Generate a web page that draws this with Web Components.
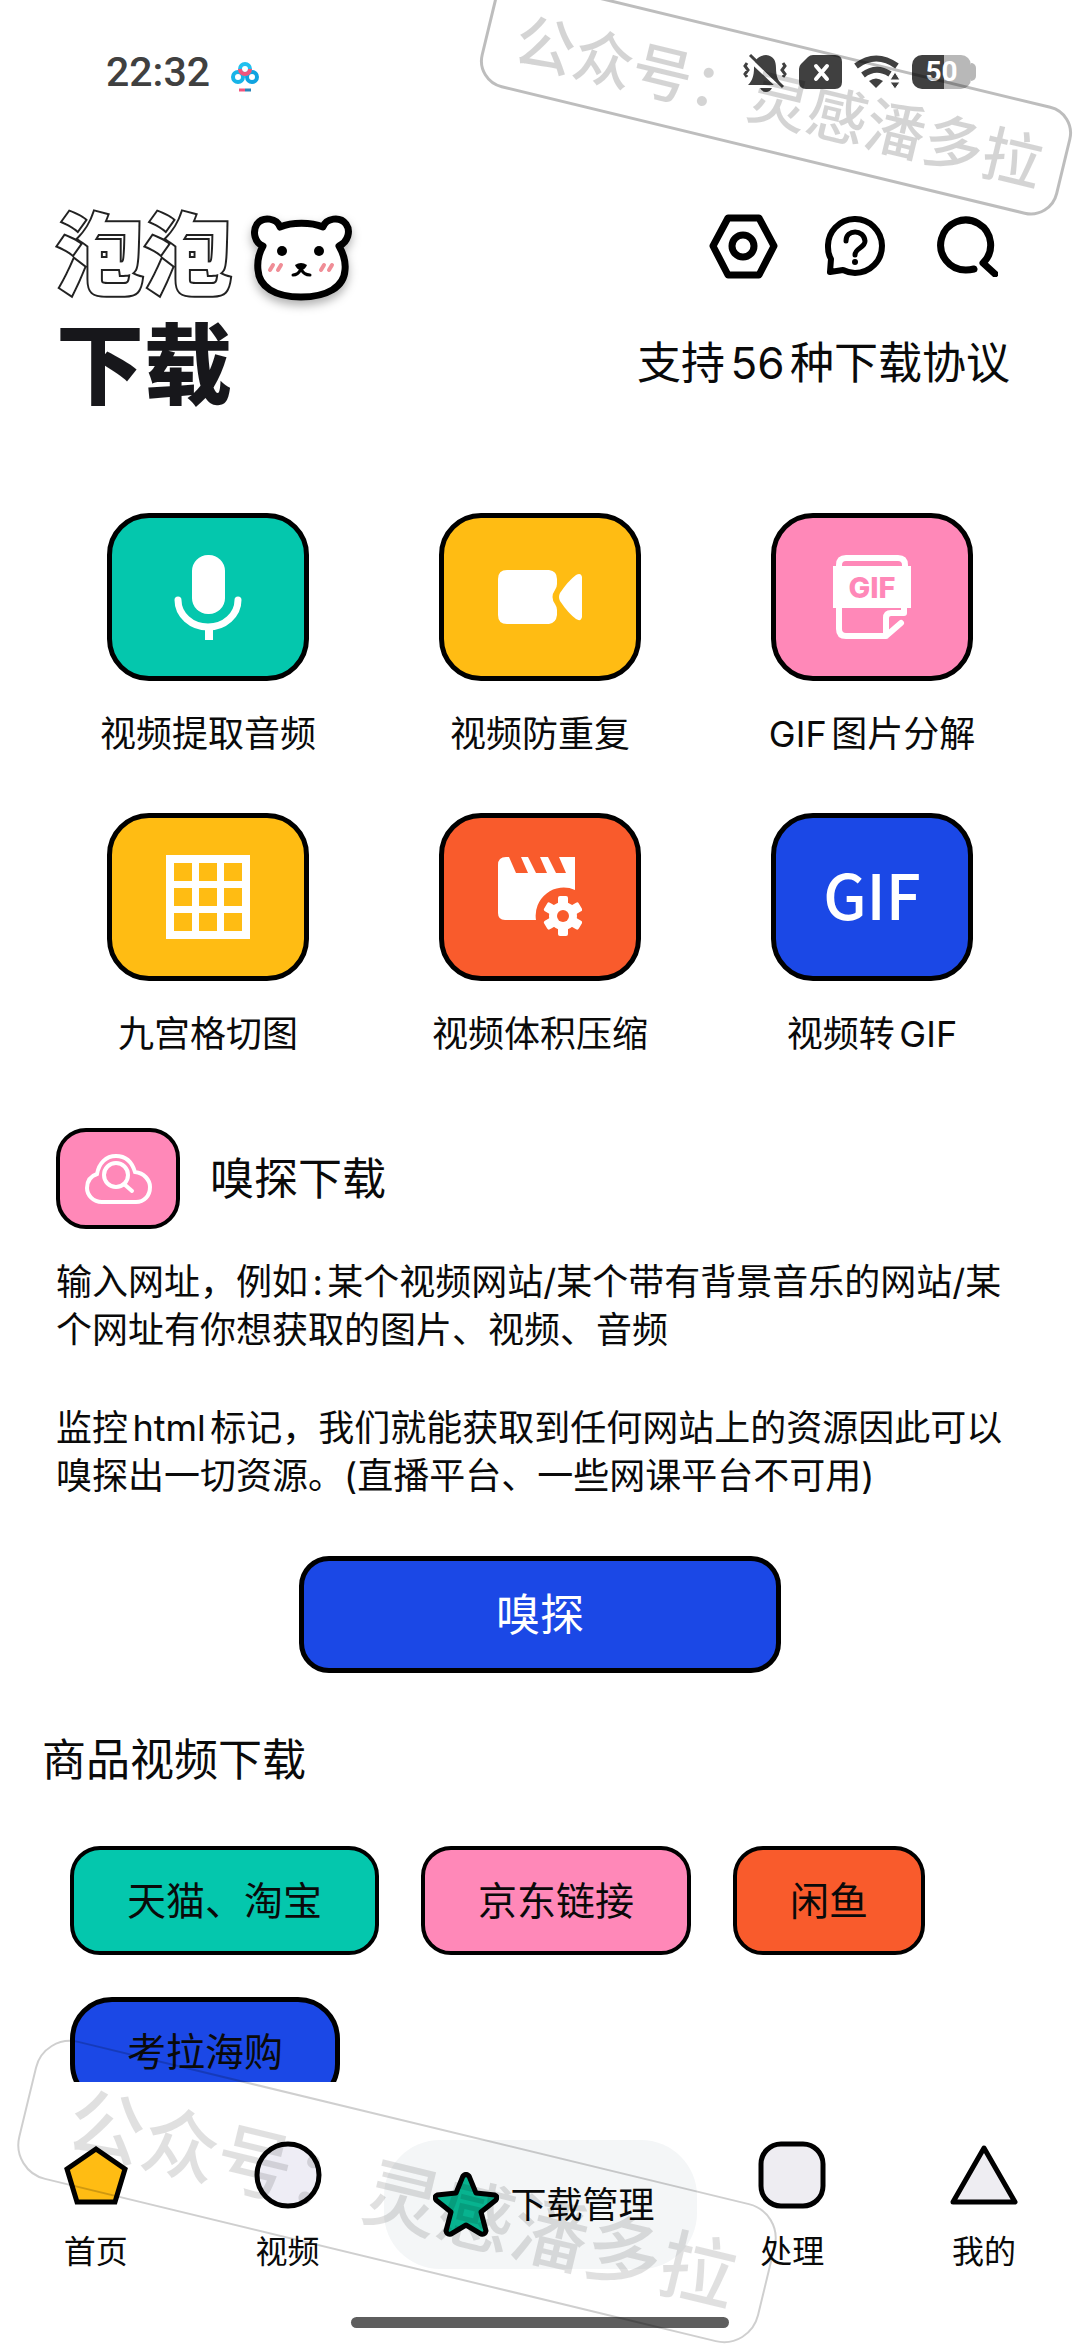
<!DOCTYPE html>
<html lang="zh-CN">
<head>
<meta charset="UTF-8">
<meta name="viewport" content="width=device-width, initial-scale=1">
<title>泡泡下载</title>
<style>
    body {
        margin: 0;
        background: #fff;
        color: #0a0a0a;
        font-family: Inter, "Noto Sans CJK SC", sans-serif;
        --green: #04c7ad;
        --yellow: #ffbc13;
        --pink: #ff88b8;
        --orange: #f95b2c;
        --blue: #1b48e6;
    }
</style>
</head>
<body>
<app-shell>
    <status-bar slot="top" time="22:32" battery="50"></status-bar>
    <app-header slot="top"></app-header>

    <tool-grid>
        <tool-tile icon="mic" color="green">视频提取音频</tool-tile>
        <tool-tile icon="camera" color="yellow">视频防重复</tool-tile>
        <tool-tile icon="gifFile" color="pink">GIF图片分解</tool-tile>
        <tool-tile icon="grid" color="yellow">九宫格切图</tool-tile>
        <tool-tile icon="film" color="orange">视频体积压缩</tool-tile>
        <tool-tile icon="gif" color="blue">视频转GIF</tool-tile>
    </tool-grid>

    <sniff-panel>
        <span slot="title">嗅探下载</span>
        <p>输入网址，例如:某个视频网站/某个带有背景音乐的网站/某<br>个网址有你想获取的图片、视频、音频</p>
        <p>监控html标记，我们就能获取到任何网站上的资源因此可以<br>嗅探出一切资源。(直播平台、一些网课平台不可用)</p>
        <span slot="action">嗅探</span>
    </sniff-panel>

    <link-section>
        <span slot="title">商品视频下载</span>
        <link-chip color="green">天猫、淘宝</link-chip>
        <link-chip color="pink">京东链接</link-chip>
        <link-chip color="orange">闲鱼</link-chip>
        <link-chip color="blue" large>考拉海购</link-chip>
    </link-section>

    <tab-bar slot="bottom">
        <tab-item icon="pentagon">首页</tab-item>
        <tab-item icon="circle">视频</tab-item>
        <tab-item icon="star" pill>下载管理</tab-item>
        <tab-item icon="square">处理</tab-item>
        <tab-item icon="triangle">我的</tab-item>
    </tab-bar>

    <water-mark slot="overlay" class="upper">公众号：灵感潘多拉</water-mark>
    <water-mark slot="overlay" class="lower">公众号：灵感潘多拉</water-mark>
</app-shell>

<script>
const icons = {
    pan: `<svg width="28" height="31" viewBox="0 0 28 31" fill="none">
        <circle cx="7" cy="16" r="5" stroke="#18b4e8" stroke-width="4"/>
        <circle cx="21" cy="16" r="5" stroke="#0fa3e0" stroke-width="4"/>
        <circle cx="14" cy="8" r="5" stroke="#22c0ee" stroke-width="4"/>
        <path d="M9 8a5 5 0 0 0 10 0" stroke="#f2547c" stroke-width="4"/>
        <path d="M8 29h6" stroke="#f2547c" stroke-width="3"/><path d="M14 29h6" stroke="#2a84b8" stroke-width="3"/>
    </svg>`,
    mute: `<svg width="44" height="39" viewBox="0 0 44 39" fill="none">
        <path d="M23 2C14 3 11 8 11 15c0 8-2 13-6 17h34c-4-4-6-9-6-17 0-7-2-12-10-13z" fill="#404040"/>
        <path d="M17 35h12q-2 4-6 4t-6-4z" fill="#404040"/>
        <path d="M4 4l34 32" stroke="#fff" stroke-width="4"/>
        <path d="M7 2l33 32" stroke="#404040" stroke-width="3"/>
        <path d="M4 10l-2 3 3 4-3 4 2 3M40 10l2 3-3 4 3 4-2 3" stroke="#404040" stroke-width="3"/>
    </svg>`,
    sim: `<svg width="43" height="34" viewBox="0 0 43 34">
        <path d="M14 0h22q7 0 7 7v20q0 7-7 7H7q-7 0-7-7V14q0-3 2-5l7-7q2-2 5-2z" fill="#404040"/>
        <path d="M17 11l11 13M28 11L17 24" stroke="#fff" stroke-width="4" stroke-linecap="round"/>
    </svg>`,
    wifi: `<svg width="46" height="34" viewBox="0 0 46 34" fill="none">
        <path d="M2 11q20-15 41 0M9 20q13-10 27-1" stroke="#404040" stroke-width="6"/>
        <path d="M15 26q7-5 14 0l-7 7z" fill="#404040"/>
        <path d="M41 17l5 8H36zM41 34l5-7H36z" fill="#404040" stroke="#fff"/>
    </svg>`,
    bear: `<svg width="101" height="86" viewBox="0 0 101 86" fill="none" stroke-linecap="round" stroke-linejoin="round">
        <path d="M29 12C26 3 12 1 6 9c-5 8-2 19 6 22-4 7-6 15-5 24 1 17 17 27 43 27s43-10 44-27c1-9-2-17-6-24 9-4 12-15 7-22-6-8-20-6-23 3-12-5-31-5-43 0z" fill="#fff" stroke="#000" stroke-width="7"/>
        <circle cx="31" cy="36" r="5" fill="#000"/><circle cx="68" cy="36" r="5" fill="#000"/>
        <path d="M44 50q6-4 12 0-2 5-6 5t-6-5z" fill="#000"/>
        <path d="M42 60q5 0 8-6 3 6 9 6" stroke="#000" stroke-width="3"/>
        <path d="M19 55l3-5M27 55l3-5M70 55l3-5M78 55l3-5" stroke="#f08d96" stroke-width="4"/>
    </svg>`,
    settings: `<svg width="69" height="65" viewBox="0 0 69 65" fill="none" stroke="#000" stroke-width="7" stroke-linejoin="round">
        <path d="M4 32L19 4h31l15 28-15 29H19z"/><circle cx="34" cy="32" r="11"/>
    </svg>`,
    help: `<svg width="61" height="61" viewBox="0 0 61 61" fill="none" stroke="#000" stroke-width="6" stroke-linecap="round" stroke-linejoin="round">
        <path d="M6 43L5 56l13-2q6 3 12 3A27 27 0 1 0 3 31q0 7 3 12z"/>
        <path d="M21 25c0-12 18-12 19 0 0 7-10 7-10 14" stroke-width="5"/><circle cx="30" cy="46" r="3" fill="#000" stroke="none"/>
    </svg>`,
    search: `<svg width="61" height="61" viewBox="0 0 61 61" fill="none" stroke="#000" stroke-width="7" stroke-linecap="round" stroke-linejoin="round">
        <path d="M37 53q-4 1-8 1A25 25 0 1 1 46 47l12 11"/>
    </svg>`,
    mic: `<svg width="68" height="85" viewBox="0 0 68 85">
        <rect x="18" width="33" height="59" rx="16" fill="#fff"/>
        <path d="M4 45a30 27 0 0 0 60 0" fill="none" stroke="#fff" stroke-width="7" stroke-linecap="round"/>
        <path d="M31 73h8v12h-8z" fill="#fff"/>
    </svg>`,
    camera: `<svg width="84" height="54" viewBox="0 0 84 54" fill="#fff">
        <path d="M9 0h42q8 1 8 9v5q0 3-2 6-5 7 0 14 2 3 2 6v5q-1 8-8 9H9q-9 0-9-9V9q0-9 9-9z"/>
        <path d="M84 7v40q-1 5-6 2-8-6-16-18-2-4 0-8Q70 11 78 5q5-3 6 2z"/>
    </svg>`,
    gifFile: `<svg width="78" height="84" viewBox="0 0 78 84">
        <path d="M6 13V10q0-7 7-7h52q7 0 7 7v3M6 50v24q0 7 7 7h40M71 50v8H58q-5 0-5 5v18l15-13" fill="none" stroke="#fff" stroke-width="6" stroke-linecap="round" stroke-linejoin="round"/>
        <path d="M0 11h78v42H0z" fill="#fff"/>
        <text x="39" y="43" text-anchor="middle" font-family="Inter, sans-serif" font-weight="800" font-size="29" fill="#ff88b8">GIF</text>
    </svg>`,
    grid: `<svg width="84" height="84" viewBox="0 0 84 84">
        <path fill="#fff" fill-rule="evenodd" d="M0 0h84v84H0zM8 8v18h18V8zM33 8v18h18V8zM58 8v18h18V8zM8 33v18h18V33zM33 33v18h18V33zM58 33v18h18V33zM8 58v18h18V58zM33 58v18h18V58zM58 58v18h18V58z"/>
    </svg>`,
    film: `<svg width="84" height="80" viewBox="0 0 84 80" fill="#fff">
        <path d="M8 0h3l7 16h12L23 0h7l8 16h11L42 0h8l8 16h10L61 0h16v33a28 28 0 0 0-39 30H7q-7 0-7-7V8q0-8 8-8z"/>
        <circle cx="65" cy="59" r="14"/>
        <rect x="60" y="39" width="10" height="40" rx="2"/>
        <rect x="60" y="39" width="10" height="40" rx="2" transform="rotate(60 65 59)"/>
        <rect x="60" y="39" width="10" height="40" rx="2" transform="rotate(120 65 59)"/>
        <circle cx="65" cy="59" r="6" fill="#f95b2c"/>
    </svg>`,
    gif: `<svg width="120" height="100" viewBox="0 0 120 100">
        <text x="60" y="73" text-anchor="middle" font-family="Noto Sans CJK SC, sans-serif" font-weight="500" font-size="62" fill="#fff">GIF</text>
    </svg>`,
    cloud: `<svg width="67" height="50" viewBox="0 0 67 50" fill="none" stroke="#fff" stroke-width="4" stroke-linecap="round">
        <path d="M17 48C8 48 2 41 2 34c0-7 4-12 10-14C14 9 21 2 31 2s16 6 19 16c9 1 15 8 15 15 0 9-6 15-14 15z"/>
        <circle cx="31" cy="21" r="12"/><path d="M39 30l8 7"/>
    </svg>`,
    pentagon: `<svg width="64" height="60" viewBox="0 0 64 60"><path d="M32 4l29 20-10 33H13L3 24z" fill="#ffbc13" stroke="#000" stroke-width="5"/></svg>`,
    circle: `<svg width="68" height="68" viewBox="0 0 68 68"><circle cx="34" cy="34" r="31" fill="#eeedf5" stroke="#000" stroke-width="5"/></svg>`,
    star: `<svg width="66" height="65" viewBox="0 0 66 65"><path d="M30 4q3-3 6 0l7 17 19 2q3 1 1 5L48 40l5 19q-1 4-5 3L33 53l-15 9q-4 1-5-3l5-19L3 28q-2-4 1-5l19-2z" fill="#07b38f" stroke="#000" stroke-width="5" stroke-linejoin="round"/></svg>`,
    square: `<svg width="68" height="68" viewBox="0 0 68 68"><rect x="3" y="3" width="62" height="62" rx="20" fill="#eeedf2" stroke="#000" stroke-width="5"/></svg>`,
    triangle: `<svg width="68" height="60" viewBox="0 0 68 60"><path d="M34 3l31 54H3z" fill="#eeedf2" stroke="#000" stroke-width="5" stroke-linejoin="round"/></svg>`
};

const base = `
    * { box-sizing: border-box; margin: 0; padding: 0; }
    svg { display: block; flex: none; }
    button, a { font: inherit; color: inherit; background: none; border: 0; cursor: pointer; text-decoration: none; }
`;

class AppShell extends HTMLElement {
    constructor() {
        super();
        this.attachShadow({ mode: 'open' });
    }

    connectedCallback() {
        let style = base + `
            :host {
                position: relative;
                display: flex;
                flex-direction: column;
                height: 100vh;
                overflow: hidden;
            }

            main {
                flex: 1;
                min-height: 0;
                overflow: hidden;
            }
        `;
        let html = `
            <slot name="top"></slot>
            <main><slot></slot></main>
            <slot name="bottom"></slot>
            <slot name="overlay"></slot>
        `;
        this.shadowRoot.innerHTML = "<style>" + style + "</style>" + html;
    }
}
customElements.define('app-shell', AppShell);

class StatusBar extends HTMLElement {
    constructor() {
        super();
        this.attachShadow({ mode: 'open' });
    }

    connectedCallback() {
        let style = base + `
            :host {
                display: flex;
                align-items: center;
                justify-content: space-between;
                height: 144px;
                padding: 0 104px 0 106px;
                font-family: Roboto, sans-serif;
                color: #404040;
            }

            .side {
                display: flex;
                align-items: center;
            }

            .left { gap: 21px; }
            .right { gap: 12px; }

            .left svg { margin-top: 8px; }

            time {
                font-size: 41px;
                font-weight: 500;
            }

            .battery {
                display: flex;
                align-items: center;
            }

            .level {
                width: 59px;
                border-radius: 10px;
                background: linear-gradient(90deg, #404040 55%, #b8b8b8 55%);
                color: #fff;
                font-size: 28px;
                font-weight: 700;
                line-height: 34px;
                text-align: center;
            }

            .nub {
                width: 5px;
                height: 18px;
                border-radius: 0 6px 6px 0;
                background: #b8b8b8;
            }
        `;
        let html = `
            <div class="side left"><time>${this.getAttribute('time')}</time>${icons.pan}</div>
            <div class="side right">
                ${icons.mute}${icons.sim}${icons.wifi}
                <div class="battery"><span class="level">${this.getAttribute('battery')}</span><span class="nub"></span></div>
            </div>
        `;
        this.shadowRoot.innerHTML = "<style>" + style + "</style>" + html;
    }
}
customElements.define('status-bar', StatusBar);

class AppHeader extends HTMLElement {
    constructor() {
        super();
        this.attachShadow({ mode: 'open' });
    }

    connectedCallback() {
        let style = base + `
            :host {
                display: flex;
                justify-content: space-between;
                padding: 56px 70px 0 56px;
            }

            h1 {
                font-size: 88px;
                font-weight: 900;
                line-height: 110px;
                color: #17171b;
            }

            .row {
                display: flex;
                align-items: center;
                gap: 19px;
            }

            .outline {
                color: #fff;
                -webkit-text-stroke: 4px #222;
                paint-order: stroke;
            }

            .row svg {
                margin-top: 6px;
                filter: drop-shadow(0 5px 5px rgba(0, 0, 0, .3));
            }

            .actions {
                display: flex;
                justify-content: flex-end;
                gap: 43px;
                height: 110px;
                padding: 0 8px 18px 0;
            }

            .actions button {
                display: grid;
                place-items: center;
                width: 69px;
            }

            .note {
                font-size: 44px;
                line-height: 106px;
                text-autospace: normal;
            }
        `;
        let html = `
            <h1><span class="row"><span class="outline">泡泡</span>${icons.bear}</span>下载</h1>
            <div>
                <div class="actions">
                    <button aria-label="设置">${icons.settings}</button>
                    <button aria-label="帮助">${icons.help}</button>
                    <button aria-label="搜索">${icons.search}</button>
                </div>
                <p class="note">支持56种下载协议</p>
            </div>
        `;
        this.shadowRoot.innerHTML = "<style>" + style + "</style>" + html;
    }
}
customElements.define('app-header', AppHeader);

class ToolGrid extends HTMLElement {
    constructor() {
        super();
        this.attachShadow({ mode: 'open' });
    }

    connectedCallback() {
        let style = `
            :host {
                display: grid;
                grid-template-columns: repeat(3, 1fr);
                row-gap: 52px;
                padding: 93px 42px 0;
            }
        `;
        this.shadowRoot.innerHTML = "<style>" + style + "</style><slot></slot>";
    }
}
customElements.define('tool-grid', ToolGrid);

class ToolTile extends HTMLElement {
    constructor() {
        super();
        this.attachShadow({ mode: 'open' });
    }

    connectedCallback() {
        let style = base + `
            :host { display: block; }

            button {
                display: flex;
                flex-direction: column;
                align-items: center;
                gap: 26px;
                width: 100%;
                font-size: 36px;
                line-height: 54px;
                text-autospace: normal;
            }

            .box {
                display: grid;
                place-items: center;
                width: 202px;
                height: 168px;
                border: 5px solid #000;
                border-radius: 42px;
                background: var(--${this.getAttribute('color')});
            }
        `;
        let html = `
            <button>
                <span class="box">${icons[this.getAttribute('icon')]}</span>
                <span><slot></slot></span>
            </button>
        `;
        this.shadowRoot.innerHTML = "<style>" + style + "</style>" + html;
    }
}
customElements.define('tool-tile', ToolTile);

class SniffPanel extends HTMLElement {
    constructor() {
        super();
        this.attachShadow({ mode: 'open' });
    }

    connectedCallback() {
        let style = base + `
            :host {
                display: block;
                padding: 67px 40px 0 56px;
            }

            header {
                display: flex;
                align-items: center;
                gap: 30px;
            }

            .box {
                display: grid;
                place-items: center;
                width: 124px;
                height: 101px;
                border: 4px solid #000;
                border-radius: 30px;
                background: var(--pink);
            }

            h2 {
                font-size: 44px;
                font-weight: 400;
                line-height: 66px;
            }

            .text {
                display: flex;
                flex-direction: column;
                gap: 50px;
                padding: 29px 0 56px;
                font-size: 36px;
                line-height: 48px;
                text-autospace: normal;
            }

            ::slotted(p) { margin: 0; }

            .action {
                display: block;
                width: 482px;
                height: 117px;
                margin: 0 auto;
                border: 5px solid #000;
                border-radius: 30px;
                background: var(--blue);
                color: #fff;
                font-size: 44px;
                line-height: 66px;
            }

            /* the text column is wider on the right, so even it out for the button */
            footer { padding-right: 16px; }
        `;
        let html = `
            <header><span class="box">${icons.cloud}</span><h2><slot name="title"></slot></h2></header>
            <div class="text"><slot></slot></div>
            <footer><button class="action"><slot name="action"></slot></button></footer>
        `;
        this.shadowRoot.innerHTML = "<style>" + style + "</style>" + html;
    }
}
customElements.define('sniff-panel', SniffPanel);

class LinkSection extends HTMLElement {
    constructor() {
        super();
        this.attachShadow({ mode: 'open' });
    }

    connectedCallback() {
        let style = base + `
            :host {
                display: block;
                padding: 54px 42px 0;
            }

            h2 {
                font-size: 44px;
                font-weight: 400;
                line-height: 66px;
            }

            .chips {
                display: flex;
                flex-wrap: wrap;
                gap: 42px;
                padding: 53px 28px 42px;
            }
        `;
        let html = `
            <h2><slot name="title"></slot></h2>
            <div class="chips"><slot></slot></div>
        `;
        this.shadowRoot.innerHTML = "<style>" + style + "</style>" + html;
    }
}
customElements.define('link-section', LinkSection);

class LinkChip extends HTMLElement {
    constructor() {
        super();
        this.attachShadow({ mode: 'open' });
    }

    connectedCallback() {
        let style = base + `
            :host { display: block; }

            button {
                height: 109px;
                padding: 0 53px;
                border: 4px solid #000;
                border-radius: 30px;
                background: var(--${this.getAttribute('color')});
                font-size: 39px;
                line-height: 58px;
            }

            :host([large]) button {
                border-width: 5px;
                border-radius: 42px;
                padding: 0 52px;
            }
        `;
        this.shadowRoot.innerHTML = "<style>" + style + "</style><button><slot></slot></button>";
    }
}
customElements.define('link-chip', LinkChip);

class TabBar extends HTMLElement {
    constructor() {
        super();
        this.attachShadow({ mode: 'open' });
    }

    connectedCallback() {
        let style = base + `
            :host {
                display: block;
                background: #fff;
            }

            nav {
                display: flex;
                align-items: flex-start;
                padding-top: 58px;
            }

            .home {
                width: 378px;
                height: 11px;
                margin: 41px auto 17px;
                border-radius: 6px;
                background: #5e5e5e;
            }
        `;
        let html = `
            <nav><slot></slot></nav>
            <div class="home"></div>
        `;
        this.shadowRoot.innerHTML = "<style>" + style + "</style>" + html;
    }
}
customElements.define('tab-bar', TabBar);

class TabItem extends HTMLElement {
    constructor() {
        super();
        this.attachShadow({ mode: 'open' });
    }

    connectedCallback() {
        let style = base + `
            :host {
                display: block;
                flex: 1;
            }

            a {
                display: flex;
                flex-direction: column;
                align-items: center;
                gap: 18px;
                font-size: 32px;
                line-height: 48px;
            }

            .icon {
                display: grid;
                place-items: center;
                height: 70px;
            }

            :host([pill]) { flex: none; }

            :host([pill]) a {
                flex-direction: row;
                justify-content: center;
                gap: 11px;
                width: 313px;
                height: 129px;
                padding-left: 8px;
                border-radius: 56px;
                background: #f4f6f7;
                font-size: 36px;
            }
        `;
        let html = `
            <a href="#"><span class="icon">${icons[this.getAttribute('icon')]}</span><span><slot></slot></span></a>
        `;
        this.shadowRoot.innerHTML = "<style>" + style + "</style>" + html;
    }
}
customElements.define('tab-item', TabItem);

class WaterMark extends HTMLElement {
    constructor() {
        super();
        this.attachShadow({ mode: 'open' });
    }

    connectedCallback() {
        let style = `
            :host {
                position: absolute;
                display: flex;
                align-items: center;
                justify-content: center;
                box-sizing: border-box;
                transform: rotate(13.6deg);
                font-family: "Noto Sans CJK SC", sans-serif;
                font-weight: 500;
                line-height: 1;
                white-space: nowrap;
                pointer-events: none;
            }

            :host(.upper) {
                top: 41px;
                left: 479px;
                width: 594px;
                height: 112px;
                padding-left: 8px;
                border: 3px solid rgba(0, 0, 0, .26);
                border-radius: 28px;
                color: rgba(0, 0, 0, .17);
                font-size: 60px;
            }

            :host(.lower) {
                bottom: 82px;
                left: 16px;
                width: 762px;
                height: 143px;
                padding-left: 14px;
                border: 2px solid rgba(0, 0, 0, .19);
                border-radius: 36px;
                color: rgba(0, 0, 0, .12);
                font-size: 76px;
            }
        `;
        this.shadowRoot.innerHTML = "<style>" + style + "</style><slot></slot>";
    }
}
customElements.define('water-mark', WaterMark);
</script>
</body>
</html>
